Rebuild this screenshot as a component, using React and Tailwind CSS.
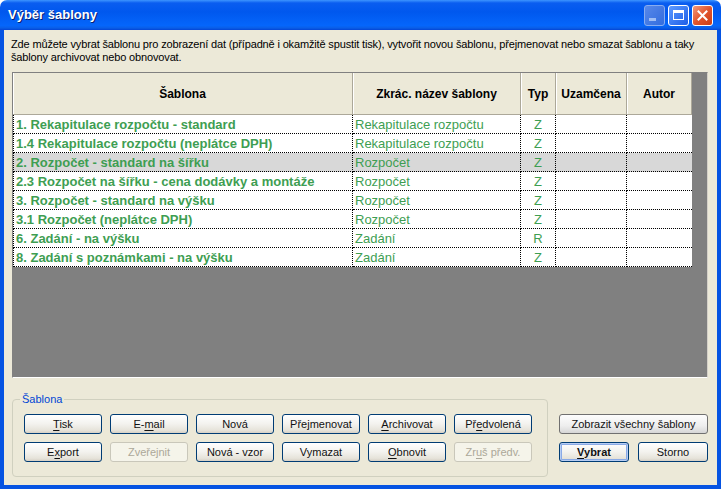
import React from "react";

const rows = [
  ["1. Rekapitulace rozpočtu - standard", "Rekapitulace rozpočtu", "Z", false],
  ["1.4 Rekapitulace rozpočtu (neplátce DPH)", "Rekapitulace rozpočtu", "Z", false],
  ["2. Rozpočet - standard na šířku", "Rozpočet", "Z", true],
  ["2.3 Rozpočet na šířku - cena dodávky a montáže", "Rozpočet", "Z", false],
  ["3. Rozpočet - standard na výšku", "Rozpočet", "Z", false],
  ["3.1 Rozpočet (neplátce DPH)", "Rozpočet", "Z", false],
  ["6. Zadání - na výšku", "Zadání", "R", false],
  ["8. Zadání s poznámkami - na výšku", "Zadání", "Z", false],
];

function Label({ text, ul }) {
  if (ul === undefined || ul < 0) return <>{text}</>;
  return (
    <>
      {text.slice(0, ul)}
      <span className="underline underline-offset-2">{text[ul]}</span>
      {text.slice(ul + 1)}
    </>
  );
}

function Btn({ text, ul, disabled, def, gray, w = "w-[78px]" }) {
  let cls =
    "h-[20px] rounded-[3px] border text-[11px] leading-[18px] text-center flex items-center justify-center whitespace-nowrap ";
  if (disabled) {
    cls += "border-[#c9c7ba] bg-[#f5f4ea] text-[#aca899] ";
  } else if (gray) {
    cls +=
      "border-[#707070] bg-[linear-gradient(180deg,#fdfdfd,#eeeeee_60%,#d6d6d6)] text-[#111] ";
  } else {
    cls +=
      "border-[#003c74] bg-[linear-gradient(180deg,#ffffff,#f3f2ee_50%,#e6e3da_85%,#d6d0c5)] text-[#111] ";
  }
  if (def) {
    cls += "shadow-[inset_0_0_0_1px_#b7cdf3,inset_0_0_0_2px_#8aaae6] font-bold ";
  } else {
    cls += "font-normal ";
  }
  return (
    <div className={cls + w}>
      <span>
        <Label text={text} ul={ul} />
      </span>
    </div>
  );
}

export default function App() {
  return (
    <div
      className="w-[721px] h-[489px] flex flex-col bg-white text-black"
      style={{ fontFamily: '"Liberation Sans", Arial, sans-serif' }}
    >
      {/* Title bar */}
      <div className="h-[30px] rounded-t-[7px] bg-[linear-gradient(180deg,#3d95ff,#0a5df0_10%,#0058ee_40%,#0566fb_85%,#0a5fe8_93%,#0345d6)] flex items-center pl-[8px] pr-[8px]">
        <div className="flex-1 text-white font-bold text-[13px] [text-shadow:1px_1px_0_#0a1e6e]">
          Výběr šablony
        </div>
        <div className="flex gap-[3px] items-center">
          <div className="w-[21px] h-[21px] rounded-[3px] border border-[#a9c0f0] bg-[linear-gradient(135deg,#6d95ea,#3f6fd8)] opacity-80 flex items-end justify-start p-[4px] pb-[4px]">
            <div className="w-[7px] h-[3px] bg-[#c8d6f4]" />
          </div>
          <div className="w-[21px] h-[21px] rounded-[3px] border border-white bg-[linear-gradient(135deg,#5e9bff,#1d5ee8)] flex items-center justify-center">
            <div className="w-[11px] h-[10px] border border-white border-t-[3px]" />
          </div>
          <div className="w-[21px] h-[21px] rounded-[3px] border border-white bg-[linear-gradient(135deg,#f29a7c,#e2552e_50%,#c93d17)] flex items-center justify-center">
            <svg width="11" height="11" viewBox="0 0 11 11">
              <path d="M1.5 1.5 L9.5 9.5 M9.5 1.5 L1.5 9.5" stroke="white" strokeWidth="2" strokeLinecap="square" />
            </svg>
          </div>
        </div>
      </div>

      {/* Window frame */}
      <div className="flex-1 bg-[#0553e2] px-[4px] pb-[4px] flex flex-col">
        <div className="flex-1 bg-[#ece9d8] flex flex-col pl-[8px] pr-[9px]">
          <div className="pt-[8px] text-[11px] leading-[13px] h-[42px] -ml-[1px] whitespace-nowrap tracking-[-0.15px]">
            Zde můžete vybrat šablonu pro zobrazení dat (případně i okamžitě spustit tisk), vytvořit novou šablonu, přejmenovat nebo smazat šablonu a taky
            <br />
            šablony archivovat nebo obnovovat.
          </div>

          {/* Table */}
          <div className="h-[306px] border-t border-l border-[#808080] border-r border-r-[#d4d0c8] border-b border-b-white bg-[#808080] flex">
            <div className="w-[679px] flex flex-col">
              {/* Header */}
              <div className="grid grid-cols-[340px_168px_35px_71px_65px] h-[42px] bg-[#ece9d8] text-[12px] font-bold">
                {["Šablona", "Zkrác. název šablony", "Typ", "Uzamčena", "Autor"].map((h) => (
                  <div
                    key={h}
                    className="flex items-center justify-center border-r border-r-[#aca899] border-b border-b-[#aca899] shadow-[inset_1px_0_0_#ffffff]"
                  >
                    {h}
                  </div>
                ))}
              </div>
              {/* Rows */}
              {rows.map((r, i) => (
                <div
                  key={i}
                  className={
                    "grid grid-cols-[340px_168px_35px_71px_65px] h-[19px] text-[13px] text-[#3e9e52] " +
                    (r[3] ? "bg-[#d8d8d8]" : "bg-white")
                  }
                >
                  <div className="border-l border-r border-b border-dotted border-black font-bold pl-[2px] pt-[1px] leading-[17px] whitespace-nowrap overflow-hidden">
                    {r[0]}
                  </div>
                  <div className="border-r border-b border-dotted border-black pl-[2px] pt-[1px] leading-[17px] whitespace-nowrap overflow-hidden">
                    {r[1]}
                  </div>
                  <div className="border-r border-b border-dotted border-black text-center pt-[1px] leading-[17px]">
                    {r[2]}
                  </div>
                  <div className="border-r border-b border-dotted border-black" />
                  <div className="border-b border-dotted border-black" />
                </div>
              ))}
            </div>
          </div>

          {/* Bottom area */}
          <div className="flex mt-[21px] h-[78px]">
            <div className="relative w-[536px] h-[78px] border border-[#d0d0bf] rounded-[4px] pt-[14px] pl-[11px]">
              <span className="absolute -top-[8px] left-[7px] px-[2px] bg-[#ece9d8] text-[11px] leading-[14px] text-[#0046d5]">
                Šablona
              </span>
              <div className="grid grid-cols-[repeat(6,78px)] gap-x-[8px] gap-y-[8px]">
                <Btn text="Tisk" ul={0} />
                <Btn text="E-mail" ul={2} />
                <Btn text="Nová" />
                <Btn text="Přejmenovat" />
                <Btn text="Archivovat" ul={0} />
                <Btn text="Předvolená" ul={2} />
                <Btn text="Export" ul={1} />
                <Btn text="Zveřejnit" disabled />
                <Btn text="Nová - vzor" />
                <Btn text="Vymazat" />
                <Btn text="Obnovit" ul={0} />
                <Btn text="Zruš předv." ul={2} disabled />
              </div>
            </div>
            <div className="ml-[11px] pt-[15px] flex flex-col gap-[8px]">
              <Btn text="Zobrazit všechny šablony" gray w="w-[149px]" />
              <div className="flex gap-[9px]">
                <Btn text="Vybrat" ul={0} def w="w-[70px]" />
                <Btn text="Storno" w="w-[70px]" />
              </div>
            </div>
          </div>
        </div>
      </div>
    </div>
  );
}
